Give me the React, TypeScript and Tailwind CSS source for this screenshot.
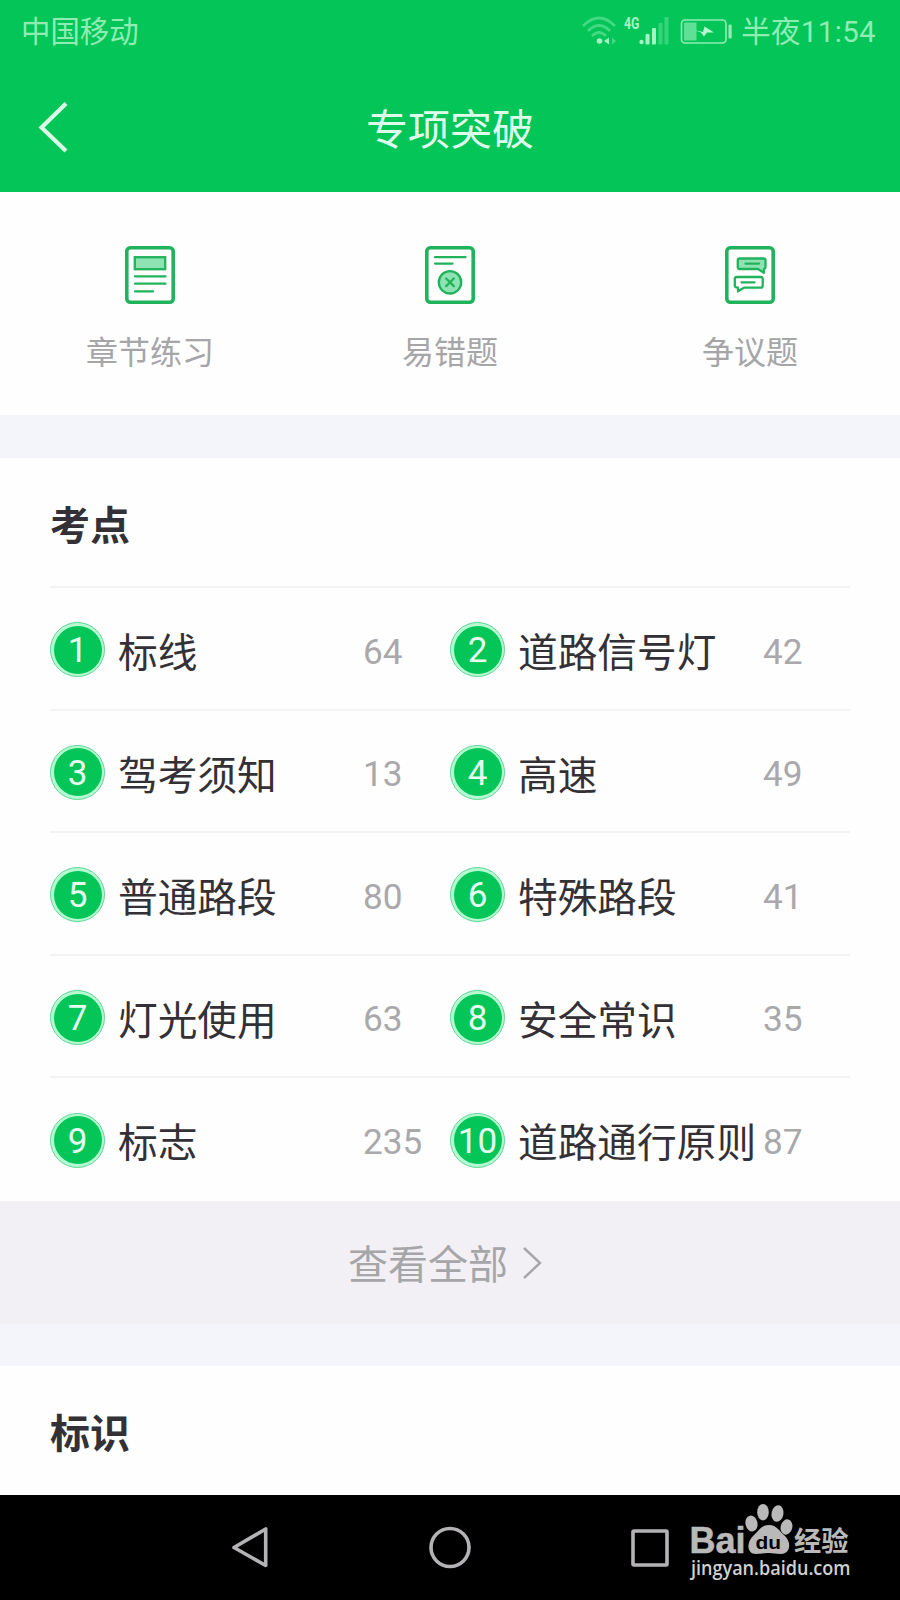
import type { ReactNode } from 'react';

interface Topic {
  id: number;
  name: string;
  count: number;
}

const topics: Topic[] = [
  { id: 1, name: '标线', count: 64 },
  { id: 2, name: '道路信号灯', count: 42 },
  { id: 3, name: '驾考须知', count: 13 },
  { id: 4, name: '高速', count: 49 },
  { id: 5, name: '普通路段', count: 80 },
  { id: 6, name: '特殊路段', count: 41 },
  { id: 7, name: '灯光使用', count: 63 },
  { id: 8, name: '安全常识', count: 35 },
  { id: 9, name: '标志', count: 235 },
  { id: 10, name: '道路通行原则', count: 87 },
];

function StatusBar() {
  return (
    <div className="flex h-[62px] items-center pl-[21px] pr-[24px] text-[29.4px] leading-none text-[#8fedb4]">
      <span className="pt-[4px]">中国移动</span>
      <svg className="ml-auto overflow-visible" width="152" height="30" viewBox="582 15 152 30" fill="none">
        {/* wifi */}
        <g stroke="#43d983" strokeWidth="2.8">
          <path d="M583 25 Q599 9 615 25" />
          <path d="M588 30 Q599 19 610 30" />
          <path d="M592 35 Q599 28 606 35" />
        </g>
        <circle cx="599.5" cy="40" r="2.8" fill="#a5f3c4" />
        <path d="M604 40 L609 36.5 V43.5 Z" fill="#a5f3c4" />
        <path d="M612 36.5 V43.5 L616 40 Z" fill="#43d983" />
        {/* mobile signal */}
        <text x="624" y="28" fontFamily="Roboto" fontWeight="700" fontSize="16.5" textLength="15.5" lengthAdjust="spacingAndGlyphs" fill="#a5f3c4">4G</text>
        <circle cx="641.5" cy="41" r="2.2" fill="#a5f3c4" />
        <rect x="645.5" y="33" width="4" height="10.5" rx="1" fill="#a5f3c4" />
        <rect x="652" y="27" width="4" height="16.5" rx="1" fill="#a5f3c4" />
        <rect x="658.5" y="22" width="4" height="21.5" rx="1" fill="#37d57b" />
        <rect x="664.5" y="16" width="4" height="27.5" rx="1" fill="#37d57b" />
        {/* battery */}
        <rect x="681.5" y="19" width="44.5" height="23" rx="3.5" stroke="#8fedb4" strokeWidth="1.6" />
        <rect x="684" y="21.5" width="12.5" height="18" fill="#5fe096" />
        <rect x="728.5" y="23.5" width="3.2" height="14" rx="1.2" fill="#8fedb4" />
        <path d="M694 29 L703 31 L704.5 25.5 L714 31.5 L707 31.5 L704 35.5 L701 31.5 Z" fill="#b5f6cf" />
      </svg>
      <span className="ml-[7px] pt-[3px] tracking-[0.4px]">半夜11:54</span>
    </div>
  );
}

function Sheet({ children }: { children: ReactNode }) {
  return (
    <svg width="50" height="58" viewBox="0 0 50 58" fill="none" stroke="#20b35c" strokeWidth="2.3" strokeLinecap="round" strokeLinejoin="round">
      <rect x="1.8" y="1.8" width="46.4" height="54.4" rx="3.5" strokeWidth="3.6" />
      {children}
    </svg>
  );
}

function ChapterIcon() {
  return (
    <Sheet>
      <rect x="9.8" y="11.2" width="30.4" height="12" fill="#8fe3b2" strokeLinejoin="miter" />
      <path d="M10 30.3 H40.5 M10 37.7 H40.5 M10 45.3 H28" />
    </Sheet>
  );
}

function MistakeIcon() {
  return (
    <Sheet>
      <path d="M10 11.2 H40.5 M10 17.6 H27.5" />
      <circle cx="25" cy="36.3" r="11.2" fill="#8fe3b2" />
      <path d="M21.2 32.5 L28.8 40.1 M28.8 32.5 L21.2 40.1" />
    </Sheet>
  );
}

function DisputeIcon() {
  return (
    <Sheet>
      <path d="M14.5 12.5 H38.5 Q40.5 12.5 40.5 14.5 V21 Q40.5 22.8 39 23 V26.8 L33 23 H14.5 Q12.8 23 12.8 21 V14.5 Q12.8 12.5 14.5 12.5 Z" fill="#8fe3b2" />
      <path d="M20.5 17.6 H34" />
      <path d="M12 31 H36 Q37.7 31 37.7 33 V39.5 Q37.7 41.7 36 41.7 H19 L13 45.3 V41.7 Q9.8 41.5 9.8 39.5 V33 Q9.8 31 12 31 Z" />
      <path d="M16.5 36.3 H29.5" />
    </Sheet>
  );
}

const shortcuts = [
  { label: '章节练习', icon: <ChapterIcon /> },
  { label: '易错题', icon: <MistakeIcon /> },
  { label: '争议题', icon: <DisputeIcon /> },
];

function TopicCell({ topic }: { topic: Topic }) {
  return (
    <div className="flex items-center">
      <span className="flex size-[55px] shrink-0 items-center justify-center rounded-full border-[1.5px] border-[#62d596] bg-[#b4fbd2] p-[2.5px]">
        <span className="flex size-full items-center justify-center rounded-full bg-[#04c557] pt-[2px] text-[35px] leading-none text-[#e4fff0]">
          {topic.id}
        </span>
      </span>
      <span className="ml-[13px] w-[245px] shrink-0 whitespace-nowrap pt-[8px] text-[39.7px] leading-none text-[#333135]">{topic.name}</span>
      <span className="pt-[5px] text-[35.2px] leading-none text-[#a9a8ab]">{topic.count}</span>
    </div>
  );
}

function Watermark() {
  return (
    <svg className="absolute left-[688px] top-[5px] overflow-visible" width="166" height="80" viewBox="688 1500 166 80" fill="#b9b9b9">
      <text x="689.5" y="1553" fontFamily="'Liberation Sans'" fontWeight="700" fontSize="36" textLength="56" lengthAdjust="spacingAndGlyphs" stroke="#b9b9b9" strokeWidth="0.6">Bai</text>
      <ellipse cx="751.5" cy="1523.5" rx="6" ry="8" transform="rotate(-12 751.5 1523.5)" />
      <ellipse cx="763" cy="1512.2" rx="5.8" ry="8.3" />
      <ellipse cx="777.5" cy="1513.5" rx="6" ry="8.3" transform="rotate(10 777.5 1513.5)" />
      <ellipse cx="786.5" cy="1527" rx="5.8" ry="7.8" transform="rotate(14 786.5 1527)" />
      <path d="M769 1525 C777 1525 779 1531 785 1536 C792 1543 790 1554 781 1554 C776 1554 773 1553 769 1553 C764 1553 761 1554 756 1554 C747 1554 746 1543 753 1536 C759 1531 761 1525 769 1525 Z" />
      <text x="755.5" y="1549" fontFamily="'Liberation Sans'" fontWeight="700" fontSize="17.5" textLength="25.5" lengthAdjust="spacingAndGlyphs" fill="#000">du</text>
      <text x="794" y="1550.5" fontFamily="'Noto Sans CJK SC'" fontWeight="700" fontSize="27.5" textLength="54.5" lengthAdjust="spacingAndGlyphs">经验</text>
      <text x="691" y="1574.5" fontFamily="'Open Sans'" fontWeight="600" fontSize="19" textLength="159.5" lengthAdjust="spacingAndGlyphs" fill="#d0d0d0">jingyan.baidu.com</text>
    </svg>
  );
}

export default function App() {
  return (
    <div className="flex h-[1600px] w-[900px] flex-col overflow-hidden bg-[#fefefe] font-[Roboto,'Noto_Sans_CJK_SC',sans-serif]">
      <header className="h-[192px] shrink-0 bg-[#04c557]">
        <StatusBar />
        <div className="grid h-[130px] grid-cols-3 items-center">
          <button className="ml-[38px] w-[32px]">
            <svg width="32" height="54" viewBox="0 0 32 54" fill="none" stroke="#d9fce7" strokeWidth="4.2">
              <path d="M28 3.5 L3.5 27.5 L28 51" />
            </svg>
          </button>
          <h1 className="pt-[7px] text-center text-[42px] leading-none text-[#dffdec]">专项突破</h1>
        </div>
      </header>

      <nav className="grid h-[223px] shrink-0 grid-cols-3 pt-[54px]">
        {shortcuts.map((item) => (
          <div key={item.label} className="flex flex-col items-center gap-[33px]">
            {item.icon}
            <span className="text-[32px] leading-none text-[#a6a5a8]">{item.label}</span>
          </div>
        ))}
      </nav>

      <div className="h-[43px] shrink-0 bg-[#f4f5fa]" />

      <section className="h-[743px] shrink-0 px-[50px]">
        <h2 className="flex h-[128px] items-center pt-[9px] text-[40px] font-bold leading-none text-[#333135]">考点</h2>
        <div className="grid h-[613px] grid-cols-2 grid-rows-5">
          {topics.map((topic) => (
            <div key={topic.id} className="flex items-center border-t-2 border-[#f3f2f5] pt-[3px]">
              <TopicCell topic={topic} />
            </div>
          ))}
        </div>
      </section>

      <button className="flex h-[123px] shrink-0 items-center justify-center gap-[15px] bg-[#f2f0f4] pr-[10px] text-[40px] leading-none text-[#a6a5a8]">
        <span className="pt-[7px]">查看全部</span>
        <svg width="19" height="34" viewBox="0 0 19 34" fill="none" stroke="#a6a5a8" strokeWidth="2.4">
          <path d="M1 2 L17 17 L1 32" />
        </svg>
      </button>

      <div className="h-[42px] shrink-0 bg-[#f4f5fa]" />

      <section className="h-[129px] shrink-0 px-[50px]">
        <h2 className="flex h-[129px] items-center pt-[8px] text-[40px] font-bold leading-none text-[#333135]">标识</h2>
      </section>

      <footer className="relative flex h-[105px] shrink-0 justify-center bg-black">
        <svg className="h-[105px] w-[450px]" viewBox="225 0 450 105" fill="none" stroke="#b4b2b5" strokeWidth="3.6" strokeLinejoin="round">
          <path d="M265.7 34 V70.5 L234 52.5 Z" />
          <circle cx="450" cy="52.5" r="19" />
          <rect x="633" y="36" width="34" height="34" rx="1" />
        </svg>
        <Watermark />
      </footer>
    </div>
  );
}
